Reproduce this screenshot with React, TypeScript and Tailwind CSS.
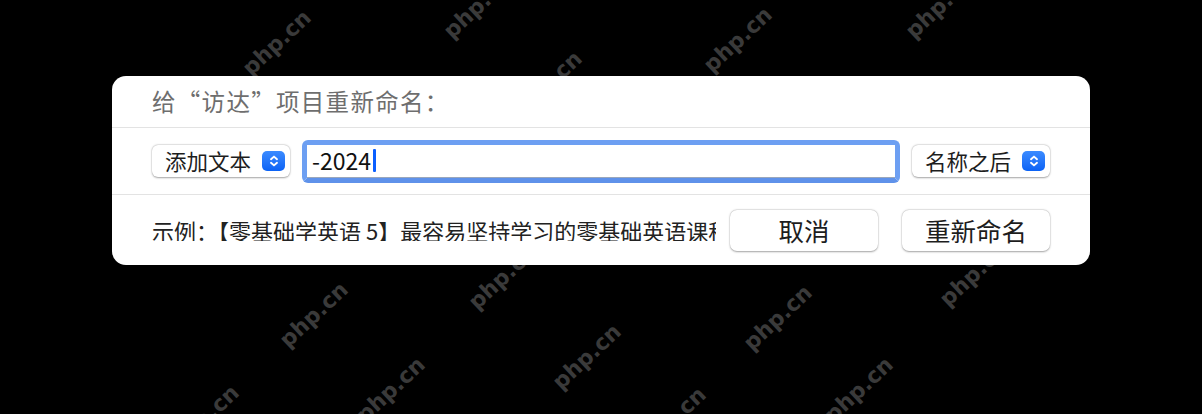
import React from 'react';

const marks = [
  { x: 277, y: 43 },
  { x: 478, y: 6 },
  { x: 548, y: 84 },
  { x: 738, y: 40 },
  { x: 940, y: 6 },
  { x: 314, y: 315 },
  { x: 503, y: 277 },
  { x: 587, y: 357 },
  { x: 778, y: 318 },
  { x: 974, y: 274 },
  { x: 391, y: 390 },
  { x: 859, y: 390 },
  { x: 205, y: 418 },
  { x: 672, y: 420 },
];

const Stepper: React.FC = () => (
  <span className="flex h-[20px] w-[23px] items-center justify-center rounded-[5px] bg-gradient-to-b from-[#3b8bff] to-[#0a62f5]">
    <svg width="12" height="14" viewBox="0 0 12 14" fill="none">
      <path d="M3 5.2 L6 2.6 L9 5.2" stroke="white" strokeWidth="1.9" strokeLinecap="round" strokeLinejoin="round" />
      <path d="M3 8.8 L6 11.4 L9 8.8" stroke="white" strokeWidth="1.9" strokeLinecap="round" strokeLinejoin="round" />
    </svg>
  </span>
);

const PopUp: React.FC<{ label: string }> = ({ label }) => (
  <div className="flex h-[32px] w-[138px] shrink-0 items-center justify-between rounded-[6px] bg-white pl-[13px] pr-[5px] shadow-[0_0.5px_2px_rgba(0,0,0,0.35),0_0_0_0.5px_rgba(0,0,0,0.06)]">
    <span className="text-[21.5px] leading-none text-[#1d1d1d]">{label}</span>
    <Stepper />
  </div>
);

const PushButton: React.FC<{ label: string }> = ({ label }) => (
  <button className="flex h-[41px] w-[148px] shrink-0 items-center justify-center rounded-[7px] bg-white text-[25.5px] leading-none text-[#1d1d1d] shadow-[0_0.5px_2px_rgba(0,0,0,0.35),0_0_0_0.5px_rgba(0,0,0,0.06)]">
    {label}
  </button>
);

const App: React.FC = () => {
  return (
    <div className="relative h-[414px] w-full overflow-hidden bg-black pt-[76px] font-['Noto_Sans_CJK_SC',sans-serif]">
      {/* watermarks */}
      {marks.map((m, i) => (
        <span
          key={i}
          className="absolute -translate-x-1/2 -translate-y-1/2 rotate-[-43deg] whitespace-nowrap font-['DejaVu_Sans',sans-serif] text-[22px] font-bold leading-none text-[#3a3a3a]"
          style={{ left: m.x, top: m.y }}
        >
          php.cn
        </span>
      ))}

      {/* rename dialog */}
      <div className="relative z-10 mx-auto flex h-[189px] w-[978px] flex-col rounded-[14px] bg-white">
        <div className="flex h-[51px] items-center pl-[40px] text-[23.5px] leading-none tracking-[1.3px] text-[#6e6e6e]">
          给“访达”项目重新命名：
        </div>
        <div className="h-px bg-[#e3e3e3]" />

        <div className="flex h-[66px] items-center gap-[12px] px-[40px]">
          <PopUp label="添加文本" />
          <div className="h-[43px] flex-1 rounded-[6px] border-[5px] border-[#6d9ff2] border-b-[#5f92ea]">
            <div className="flex h-full items-center border-b border-[#9aa7bb] bg-white pl-[5px]">
              <span className="text-[23px] leading-none text-[#111]">-2024</span>
              <span className="ml-[2px] h-[23px] w-[3px] rounded-[1px] bg-[#0b5fff]" />
            </div>
          </div>
          <PopUp label="名称之后" />
        </div>
        <div className="h-px bg-[#e3e3e3]" />

        <div className="flex flex-1 items-center pl-[40px] pr-[40px]">
          <div className="mr-[14px] min-w-0 flex-1 overflow-hidden whitespace-nowrap text-[22px] leading-none text-[#222]">
            示例：【零基础学英语 5】最容易坚持学习的零基础英语课程
          </div>
          <div className="flex gap-[24px]">
            <PushButton label="取消" />
            <PushButton label="重新命名" />
          </div>
        </div>
      </div>
    </div>
  );
};

export default App;
